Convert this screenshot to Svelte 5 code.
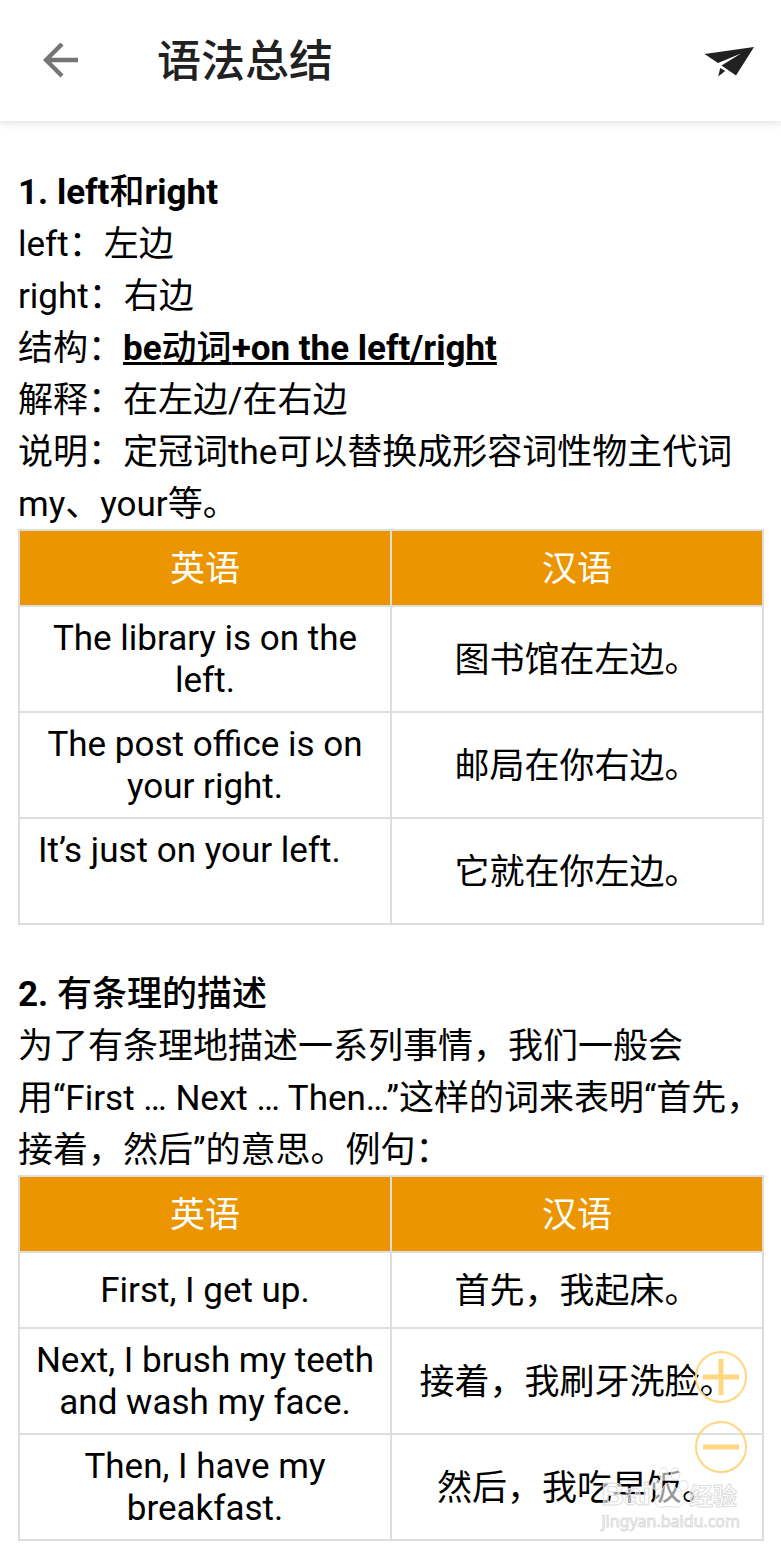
<script>
    const sentences = [
        { en: 'The library is on the left.', zh: '图书馆在左边。' },
        { en: 'The post office is on your right.', zh: '邮局在你右边。' },
        { en: 'It’s just on your left.', zh: '它就在你左边。', top: true },
    ];

    const steps = [
        { en: 'First, I get up.', zh: '首先，我起床。' },
        { en: 'Next, I brush my teeth and wash my face.', zh: '接着，我刷牙洗脸。' },
        { en: 'Then, I have my breakfast.', zh: '然后，我吃早饭。' },
    ];
</script>

{#snippet examples(rows)}
    <table>
        <thead>
            <tr>
                <th>英语</th>
                <th>汉语</th>
            </tr>
        </thead>
        <tbody>
            {#each rows as { en, zh, top }}
                <tr class:top>
                    <td class="en">{en}</td>
                    <td>{zh}</td>
                </tr>
            {/each}
        </tbody>
    </table>
{/snippet}

<div class="page" lang="zh-CN">
    <header>
        <button aria-label="返回">
            <svg width="36" height="36" viewBox="0 0 36 36">
                <path d="M19 1 3 17l16 16M3 17h32" fill="none" stroke="#757575" stroke-width="4.4" />
            </svg>
        </button>
        <h1>语法总结</h1>
        <button aria-label="分享">
            <svg width="50" height="32" viewBox="0 0 50 32">
                <path d="M0.5 9 50 2 32 30.5 17.5 20.5 37 8.5 14 18ZM16.2 23l5 3-7 5.5z" fill="#212121" />
            </svg>
        </button>
    </header>

    <main>
        <section>
            <h2>1. left<span>和</span>right</h2>
            <p>left：左边</p>
            <p>right：右边</p>
            <p>结构：<strong>be<span>动词</span>+on the left/right</strong></p>
            <p>解释：在左边/在右边</p>
            <p>说明：定冠词the可以替换成形容词性物主代词my、your等。</p>
            {@render examples(sentences)}
        </section>

        <section>
            <h2>2. <span>有条理的描述</span></h2>
            <p>为了有条理地描述一系列事情，我们一般会<span class="keep">用“First</span> … Next … Then…”这样的词来表明“首先，接着，然后”的意思。例句：</p>
            {@render examples(steps)}
        </section>
    </main>

    <div class="zoom">
        <button aria-label="放大">
            <svg viewBox="0 0 52 52">
                <circle cx="26" cy="26" r="25" />
                <path d="M8 26h36M26 8v36" />
            </svg>
        </button>
        <button aria-label="缩小">
            <svg viewBox="0 0 52 52">
                <circle cx="26" cy="26" r="25" />
                <path d="M8 26h36" />
            </svg>
        </button>
    </div>

    <div class="watermark">
        <div class="brand">
            <span>Bai</span>
            <svg width="38" height="45" viewBox="0 0 42 46">
                <ellipse cx="6" cy="20" rx="5" ry="6" />
                <ellipse cx="14" cy="8" rx="5" ry="7" />
                <ellipse cx="27" cy="8" rx="5" ry="7" />
                <ellipse cx="36" cy="21" rx="5" ry="6" />
                <path d="M20 18c6 0 7 6 11 10 5 4 6 8 4 13-3 6-9 3-15 3s-12 3-15-3c-2-5 0-9 5-13 4-4 4-10 10-10z" />
            </svg>
            <span class="cn">经验</span>
        </div>
        <div class="site">jingyan.baidu.com</div>
    </div>
</div>

<style>
    :global(body) {
        margin: 0;
        background: #fff;
    }
    .page {
        position: relative;
        padding-bottom: 7px;
        color: #000;
        font-family: Roboto, "Noto Sans CJK SC", sans-serif;
        font-size: 35px;
        line-height: 52px;
    }
    header {
        display: flex;
        align-items: center;
        height: 121px;
        padding: 0 27px 0 43px;
        box-shadow: 0 2px 8px rgba(0, 0, 0, 0.12);
    }
    h1 {
        flex: 1;
        margin: 0 0 0 78px;
        padding-top: 2px;
        color: #212121;
        font-size: 44px;
        font-weight: 500;
    }
    button {
        display: flex;
        padding: 0;
        border: none;
        background: none;
        cursor: pointer;
    }
    main {
        display: flex;
        flex-direction: column;
        gap: 44px;
        padding: 46px 17px 0 18px;
    }
    h2,
    p {
        margin: 0;
        font-size: inherit;
    }
    h2 span,
    strong span {
        font-weight: 500;
    }
    strong {
        text-decoration: underline;
    }
    .keep {
        white-space: nowrap;
    }
    table {
        width: 100%;
        margin-top: -2px;
        border-collapse: collapse;
        table-layout: fixed;
    }
    th,
    td {
        padding: 13px 12px 9px;
        border: 2px solid #ddd;
        text-align: center;
    }
    th {
        background: #eb9500;
        color: #fff;
        font-weight: 400;
    }
    .en {
        padding: 11px 12px 9px;
        line-height: 42px;
    }
    .top .en {
        height: 84px;
        padding-left: 18px;
        text-align: left;
        vertical-align: top;
    }
    .zoom {
        position: absolute;
        right: 34px;
        bottom: 75px;
        display: flex;
        flex-direction: column;
        gap: 18px;
    }
    .zoom svg {
        width: 52px;
        height: 52px;
        fill: none;
        stroke: #ffd780;
        stroke-width: 2;
    }
    .zoom path {
        stroke-width: 5;
    }
    .watermark {
        position: absolute;
        right: 41px;
        bottom: 16px;
        color: rgba(255, 255, 255, 0.6);
        -webkit-text-stroke: 1px #ddd;
    }
    .brand {
        display: flex;
        align-items: flex-end;
        padding-right: 3px;
        font: bold 32px/32px "Liberation Sans", sans-serif;
    }
    .brand svg {
        fill: rgba(255, 255, 255, 0.6);
        stroke: #ddd;
    }
    .cn {
        font: bold 24px/30px "Noto Sans CJK SC", sans-serif;
    }
    .site {
        font: 16px/22px "Noto Sans", sans-serif;
        text-align: right;
    }
</style>
